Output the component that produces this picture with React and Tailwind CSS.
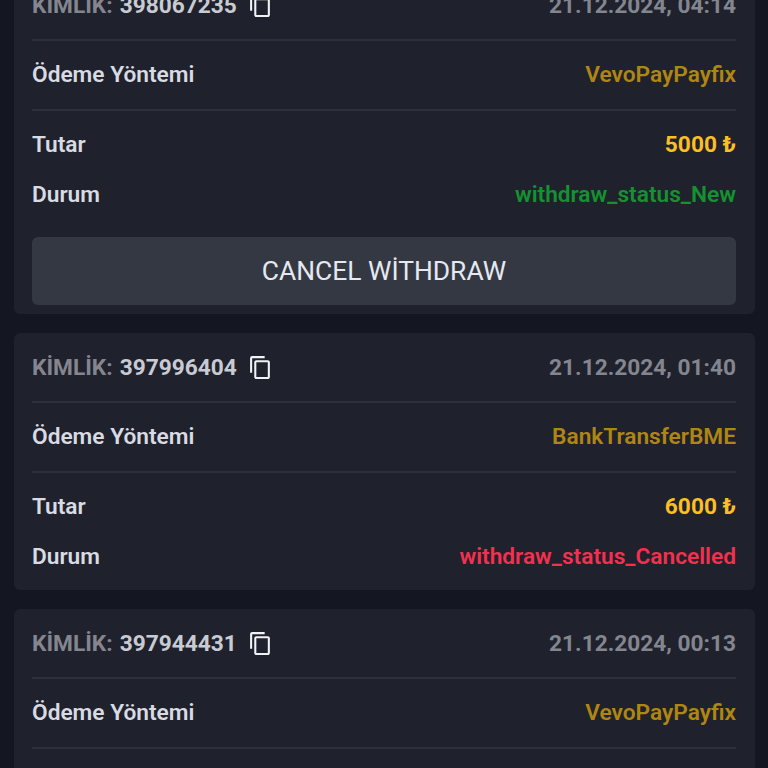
const withdrawals = [
  { id: "398067235", date: "21.12.2024, 04:14", method: "VevoPayPayfix", amount: "5000", status: "withdraw_status_New", statusColor: "text-[#14922f]", cancel: true },
  { id: "397996404", date: "21.12.2024, 01:40", method: "BankTransferBME", amount: "6000", status: "withdraw_status_Cancelled", statusColor: "text-[#f5304f]" },
  { id: "397944431", date: "21.12.2024, 00:13", method: "VevoPayPayfix", amount: "5000", status: "withdraw_status_Cancelled", statusColor: "text-[#f5304f]" },
];

function CopyIcon() {
  return (
    <svg width="25" height="25" viewBox="0 0 24 24" fill="#f1f2f5" className="shrink-0">
      <path d="M16 1H4c-1.1 0-2 .9-2 2v14h2V3h12V1zm3 4H8c-1.1 0-2 .9-2 2v14c0 1.1.9 2 2 2h11c1.1 0 2-.9 2-2V7c0-1.1-.9-2-2-2zm0 16H8V7h11v14z" />
    </svg>
  );
}

function Card({ row }) {
  return (
    <div className="flex flex-col bg-[#1f212c] rounded-md pl-[18px] pr-[19px]">
      <div className="flex items-center justify-between h-[70px] pt-[2px] border-b-2 border-[#2d2f3a]">
        <div className="flex items-center">
          <span className="text-[#84868f] font-bold">KİMLİK:</span>
          <span className="text-[#c9cbd3] font-bold ml-[7px]">{row.id}</span>
          <span className="ml-[11px]"><CopyIcon /></span>
        </div>
        <span className="text-[#84868f] font-bold">{row.date}</span>
      </div>
      <div className="flex items-center justify-between h-[70px] border-b-2 border-[#2d2f3a]">
        <span className="text-[#d9dbe2] font-semibold">Ödeme Yöntemi</span>
        <span className="text-[#b08613] font-semibold">{row.method}</span>
      </div>
      <div className="flex items-center justify-between h-[67px] pt-[2px]">
        <span className="text-[#d9dbe2] font-semibold">Tutar</span>
        <span className="text-[#fbbf24] font-bold">{row.amount} ₺</span>
      </div>
      <div className="flex items-center justify-between h-[34px] mb-[16px]">
        <span className="text-[#d9dbe2] font-semibold">Durum</span>
        <span className={`font-semibold ${row.statusColor}`}>{row.status}</span>
      </div>
      {row.cancel && (
        <button className="w-full h-[68px] mt-[9px] mb-[9px] pt-[2px] rounded-md bg-[#333843] text-[#e6e8ef] text-[26.4px]">
          CANCEL WİTHDRAW
        </button>
      )}
    </div>
  );
}

export default function App() {
  return (
    <div className="h-[768px] overflow-hidden bg-[#141622] font-['Roboto',sans-serif] text-[22.7px]">
      <div className="flex flex-col gap-[19px] -mt-[29px] ml-[14px] mr-[13px]">
        {withdrawals.map((row) => (
          <Card key={row.id} row={row} />
        ))}
      </div>
    </div>
  );
}
